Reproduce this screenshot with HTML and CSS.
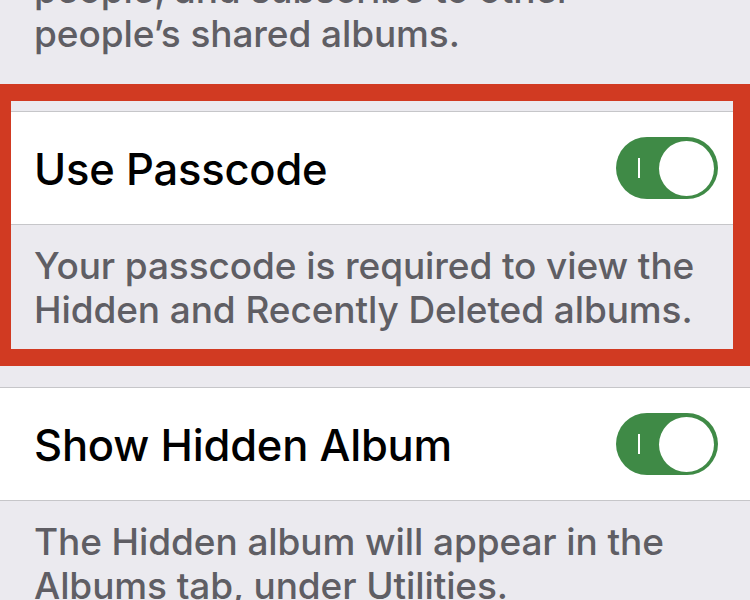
FILE: index.html
```html
<!DOCTYPE html>
<html lang="en">
<head>
<meta charset="utf-8">
<link rel="stylesheet" href="styles.css">
</head>
<body>
<div class="screen">
  <div class="footer first">
    <p>people, and subscribe to other</p>
    <p>people’s shared albums.</p>
  </div>
  <div class="cell">
    <span class="label">Use Passcode</span>
    <span class="switch"><span class="on-mark"></span><span class="knob"></span></span>
  </div>
  <div class="footer">
    <p>Your passcode is required to view the</p>
    <p>Hidden and Recently Deleted albums.</p>
  </div>
  <div class="cell">
    <span class="label">Show Hidden Album</span>
    <span class="switch"><span class="on-mark"></span><span class="knob"></span></span>
  </div>
  <div class="footer">
    <p>The Hidden album will appear in the</p>
    <p>Albums tab, under Utilities.</p>
  </div>
  <div class="highlight"></div>
</div>
</body>
</html>
```
FILE: styles.css
```css
html, body {
  margin: 0;
  padding: 0;
  background: #ebeaef;
}
.screen {
  position: relative;
  width: 750px;
  height: 600px;
  overflow: hidden;
  font-family: Inter, "Noto Sans", sans-serif;
}
.footer {
  padding: 19px 30px 55px 34px;
  color: #5f5e64;
  font-size: 37px;
  line-height: 44px;
  font-weight: 500;
  letter-spacing: -0.1px;
}
.footer p {
  margin: 0;
  white-space: nowrap;
}
.footer.first {
  margin-top: -51px;
}
.cell {
  display: flex;
  align-items: center;
  justify-content: space-between;
  box-sizing: border-box;
  height: 114px;
  padding: 0 32px 0 34px;
  background: #fff;
  border-top: 1px solid #c6c6c9;
  border-bottom: 1px solid #c6c6c9;
}
.label {
  font-size: 43.5px;
  line-height: 52px;
  padding-top: 2px;
  color: #000;
  font-weight: 500;
  letter-spacing: -0.2px;
}
.switch {
  position: relative;
  flex: none;
  width: 102px;
  height: 62px;
  border-radius: 31px;
  background: #3f8a46;
}
.on-mark {
  position: absolute;
  left: 22px;
  top: 21px;
  width: 2px;
  height: 20px;
  background: #fff;
}
.knob {
  position: absolute;
  right: 4px;
  top: 3.5px;
  width: 55px;
  height: 55px;
  border-radius: 50%;
  background: #fff;
}
.highlight {
  position: absolute;
  top: 84px;
  left: 0;
  width: 750px;
  height: 282px;
  box-sizing: border-box;
  border: 17px solid #d13a22;
  border-left-width: 11px;
}
```
